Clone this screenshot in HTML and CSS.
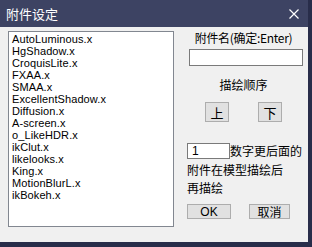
FILE: index.html
```html
<!DOCTYPE html>
<html>
<head>
<meta charset="utf-8">
<link rel="stylesheet" href="styles.css">
</head>
<body>
<div class="dialog">
  <div class="titlebar">
    <span class="title">附件设定</span>
    <svg class="close" width="10" height="10" viewBox="0 0 10 10"><path d="M0.5 0.5L9.5 9.5M9.5 0.5L0.5 9.5" stroke="#fff" stroke-width="1.2" fill="none"/></svg>
  </div>
  <div class="content">
    <div class="list">
      <div class="item">AutoLuminous.x</div>
      <div class="item">HgShadow.x</div>
      <div class="item">CroquisLite.x</div>
      <div class="item">FXAA.x</div>
      <div class="item">SMAA.x</div>
      <div class="item">ExcellentShadow.x</div>
      <div class="item">Diffusion.x</div>
      <div class="item">A-screen.x</div>
      <div class="item">o_LikeHDR.x</div>
      <div class="item">ikClut.x</div>
      <div class="item">likelooks.x</div>
      <div class="item">King.x</div>
      <div class="item">MotionBlurL.x</div>
      <div class="item">ikBokeh.x</div>
    </div>
    <div class="side">
      <div class="label name-label">附件名(确定:Enter)</div>
      <div class="textbox name-box"></div>
      <div class="label order-label">描绘顺序</div>
      <div class="order-row">
        <div class="btn order-btn">上</div>
        <div class="btn order-btn">下</div>
      </div>
      <div class="count-row">
        <div class="textbox count-box">1</div>
        <span class="label">数字更后面的</span>
      </div>
      <div class="label desc first">附件在模型描绘后</div>
      <div class="label desc">再描绘</div>
      <div class="action-row">
        <div class="btn ok">OK</div>
        <div class="btn cancel">取消</div>
      </div>
    </div>
  </div>
</div>
</body>
</html>
```

FILE: styles.css
```css
html, body {
  margin: 0;
  padding: 0;
  background: #282d4a;
}
body {
  width: 312px;
  height: 247px;
  overflow: hidden;
}
.dialog {
  width: 308px;
  height: 242px;
  background: #f0f0f0;
  font-family: "Noto Sans CJK SC", "Liberation Sans", sans-serif;
  color: #000;
}
.titlebar {
  height: 27px;
  background: #3d4363;
  display: flex;
  align-items: center;
  justify-content: space-between;
  padding: 0 9px 0 6px;
  box-sizing: border-box;
}
.title {
  color: #fff;
  font-size: 13px;
  line-height: 14px;
}
.close {
  display: block;
  margin-top: 1px;
}
.content {
  display: flex;
  padding: 4px 0 0 8px;
}
.list {
  width: 166px;
  height: 196px;
  box-sizing: border-box;
  border: 1px solid #828790;
  background: #fff;
  padding: 1px 0 0 3px;
  font-family: "Liberation Sans", sans-serif;
  font-size: 11px;
  letter-spacing: 0.1px;
}
.item {
  height: 12px;
  line-height: 12px;
  white-space: nowrap;
}
.side {
  width: 134px;
  box-sizing: border-box;
  padding-left: 5px;
  display: flex;
  flex-direction: column;
}
.label {
  font-size: 12px;
  line-height: 12px;
  white-space: nowrap;
}
.name-label {
  margin-top: 1px;
  text-align: center;
  letter-spacing: -0.3px;
}
.textbox {
  box-sizing: border-box;
  border: 1px solid #7a7a7a;
  background: #fff;
}
.name-box {
  margin: 5px 0 0 10px;
  width: 114px;
  height: 17px;
}
.order-label {
  margin-top: 13px;
  text-align: center;
}
.order-row {
  display: flex;
  gap: 29px;
  margin: 11px 0 0 26px;
}
.btn {
  box-sizing: border-box;
  background: #e1e1e1;
  border: 1px solid #adadad;
  display: flex;
  align-items: center;
  justify-content: center;
  font-size: 13px;
}
.order-btn {
  width: 24px;
  height: 20px;
}
.count-row {
  display: flex;
  align-items: center;
  margin: 21px 0 0 8px;
}
.count-box {
  width: 43px;
  height: 16px;
  font-family: "Liberation Sans", sans-serif;
  font-size: 12px;
  line-height: 14px;
  padding-left: 4px;
}
.desc {
  line-height: 18px;
  margin-left: 8px;
}
.desc.first {
  margin-top: 2px;
}
.action-row {
  display: flex;
  gap: 18px;
  margin: 7px 0 0 8px;
}
.ok {
  width: 44px;
  height: 15px;
  font-family: "Liberation Sans", sans-serif;
  font-size: 12px;
}
.cancel {
  width: 41px;
  height: 15px;
  font-size: 12px;
}
```
